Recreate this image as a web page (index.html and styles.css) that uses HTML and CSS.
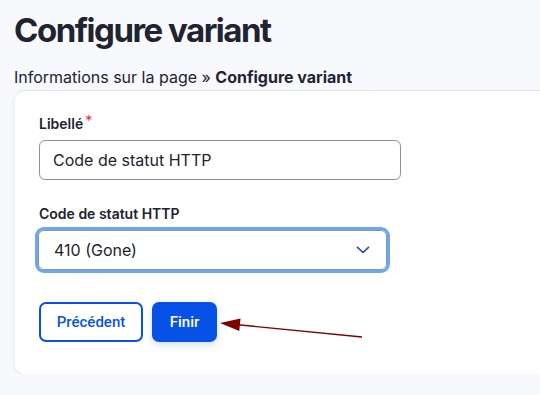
FILE: index.html
```html
<!DOCTYPE html>
<html lang="fr">
<head>
<meta charset="utf-8">
<title>Configure variant</title>
<link rel="stylesheet" href="styles.css">
</head>
<body>
<div class="page">
  <h1 class="title">Configure variant</h1>
  <nav class="crumbs">Informations sur la page » <strong>Configure variant</strong></nav>
  <div class="card">
    <div class="item">
      <label class="label">Libellé<span class="req">*</span></label>
      <div class="input">Code de statut HTTP</div>
    </div>
    <div class="item">
      <label class="label">Code de statut HTTP</label>
      <div class="select">
        <span>410 (Gone)</span>
        <svg class="chev" width="14" height="8" viewBox="0 0 14 8"><path d="M1.5 1.3 L7 6.5 L12.5 1.3" fill="none" stroke="#2449b8" stroke-width="1.6" stroke-linecap="round" stroke-linejoin="round"/></svg>
      </div>
    </div>
    <div class="actions">
      <span class="btn btn-outline">Précédent</span>
      <span class="btn btn-primary">Finir</span>
      <svg class="arrow" width="150" height="24" viewBox="0 0 150 24"><line x1="20" y1="9.8" x2="144" y2="22" stroke="#800000" stroke-width="1.4"/><polygon points="2,8 22.5,3.5 21.3,16" fill="#800000"/></svg>
    </div>
  </div>
</div>
</body>
</html>
```
FILE: styles.css
```css
html, body {
  margin: 0;
  padding: 0;
  background: #f8f9fd;
  overflow: hidden;
}
body {
  font-family: Inter, "Noto Sans", sans-serif;
  color: #222330;
}
.page {
  padding: 10px 0 0 14px;
}
.title {
  margin: 0;
  font-size: 33px;
  line-height: 40px;
  font-weight: 700;
  letter-spacing: -1.5px;
}
.crumbs {
  margin-top: 17px;
  font-size: 16px;
  line-height: 20px;
  color: #222330;
}
.crumbs strong {
  font-weight: 700;
}
.card {
  margin-top: 3px;
  margin-left: 1px;
  margin-right: -30px;
  background: #fff;
  border-radius: 10px;
  border-top: 1px solid #e4e5ea;
  box-shadow: 0 2px 6px rgba(30, 40, 80, 0.08);
  padding: 24px 24px 32px;
}
.item {
  margin-bottom: 25px;
}
.label {
  display: block;
  font-size: 14px;
  line-height: 18px;
  font-weight: 600;
  margin-bottom: 7px;
}
.req {
  color: #e52b3a;
  font-size: 14px;
  margin-left: 2px;
  position: relative;
  top: -3px;
  font-weight: 400;
}
.input {
  box-sizing: border-box;
  width: 362px;
  height: 40px;
  border: 1px solid #8e929c;
  border-radius: 6px;
  padding: 0 13px;
  font-size: 16px;
  line-height: 38px;
  color: #222330;
}
.select {
  box-sizing: border-box;
  width: 349px;
  height: 40px;
  margin-left: -1px;
  border: 1px solid #8e929c;
  border-radius: 6px;
  padding: 0 14px 0 15px;
  font-size: 16px;
  display: flex;
  align-items: center;
  justify-content: space-between;
  box-shadow: 0 0 0 3px #6aa8f0;
}
.chev {
  margin-right: 2px;
}
.actions {
  margin-top: 32px;
  display: flex;
  align-items: center;
  gap: 9px;
}
.btn {
  box-sizing: border-box;
  height: 40px;
  display: inline-flex;
  align-items: center;
  justify-content: center;
  font-family: Roboto, Inter, sans-serif;
  font-size: 15px;
  font-weight: 500;
  border-radius: 7px;
}
.btn-outline {
  width: 104px;
  border: 2px solid #0752e6;
  color: #0752e6;
  background: #fff;
}
.btn-primary {
  width: 65px;
  background: #0752e6;
  color: #fff;
  box-shadow: 0 3px 8px rgba(7, 82, 230, 0.18);
}
.arrow {
  margin-left: -8px;
  margin-top: 10px;
  overflow: visible;
}
```
